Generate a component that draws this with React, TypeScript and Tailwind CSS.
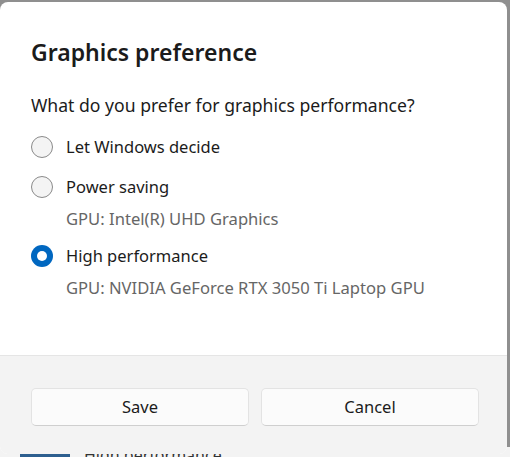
import React from 'react';

const font = { fontFamily: '"Noto Sans", "Open Sans", sans-serif' };

function Radio({ checked }: { checked?: boolean }) {
  if (checked) {
    return (
      <span className="flex h-[22px] w-[22px] shrink-0 items-center justify-center rounded-full bg-[#0067c0]">
        <span className="h-[10px] w-[10px] rounded-full bg-white" />
      </span>
    );
  }
  return <span className="h-[22px] w-[22px] shrink-0 rounded-full border border-[#8a8a8a] bg-[#f4f4f4]" />;
}

function Option({ label, checked, sub, className }: { label: string; checked?: boolean; sub?: string; className?: string }) {
  return (
    <div className={className}>
      <div className="flex h-[24px] items-center gap-[13px]">
        <Radio checked={checked} />
        <span className="text-[16.5px] text-[#1b1b1b]">{label}</span>
      </div>
      {sub && <div className="mt-[8px] h-[24px] pl-[35px] text-[16.6px] leading-[24px] text-[#666666]">{sub}</div>}
    </div>
  );
}

export default function App() {
  return (
    <div className="relative h-[457px] w-[510px] overflow-hidden bg-[#8f8f8f]" style={font}>
      <div className="absolute bottom-0 left-0 right-0 flex h-[10px] items-end bg-[#f3f3f3]">
        <div className="ml-[20px] h-[4px] w-[50px] bg-[#2d5f8f]" />
        <div className="ml-[14px] text-[16px] leading-[4px] text-[#333]">High performance</div>
      </div>
      <div className="relative mr-[3px] mt-[2px] flex h-[452px] flex-col overflow-hidden rounded-[8px] bg-white">
        <div className="flex-1 px-[31px] pt-[34px]">
          <h1 className="text-[23px] font-semibold leading-[32px] text-[#1b1b1b]">Graphics preference</h1>
          <p className="mt-[25px] text-[17.6px] leading-[24px] text-[#1b1b1b]">What do you prefer for graphics performance?</p>
          <Option className="mt-[18px]" label="Let Windows decide" />
          <Option className="mt-[16px]" label="Power saving" sub="GPU: Intel(R) UHD Graphics" />
          <Option className="mt-[13px]" label="High performance" checked sub="GPU: NVIDIA GeForce RTX 3050 Ti Laptop GPU" />
        </div>
        <div className="flex h-[99px] gap-[12px] border-t border-[#e5e5e5] bg-[#f3f3f3] pl-[31px] pr-[28px] pt-[32px]">
          <button className="h-[38px] flex-1 rounded-[5px] border border-[#e3e3e3] border-b-[#cfcfcf] bg-[#fbfbfb] text-[16.5px] text-[#1b1b1b]">
            Save
          </button>
          <button className="h-[38px] flex-1 rounded-[5px] border border-[#e3e3e3] border-b-[#cfcfcf] bg-[#fbfbfb] text-[16.5px] text-[#1b1b1b]">
            Cancel
          </button>
        </div>
      </div>
    </div>
  );
}
